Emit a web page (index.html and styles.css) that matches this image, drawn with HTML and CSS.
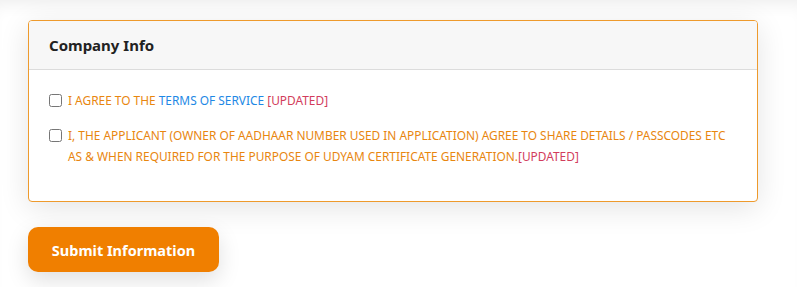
FILE: index.html
```html
<!DOCTYPE html>
<html lang="en">
<head>
  <meta charset="UTF-8">
  <meta name="viewport" content="width=device-width, initial-scale=1.0">
  <title>Company Info</title>
  <link rel="stylesheet" href="styles.css">
</head>
<body>

  <div class="page">
    <div class="card">
      <div class="card-header">Company Info</div>
      <div class="card-body">
        <label class="agree">
          <input type="checkbox" class="check">
          <span>I AGREE TO THE <a href="#" class="terms">TERMS OF SERVICE</a> <span class="updated">[UPDATED]</span></span>
        </label>
        <label class="agree">
          <input type="checkbox" class="check">
          <span>I, THE APPLICANT (OWNER OF AADHAAR NUMBER USED IN APPLICATION) AGREE TO SHARE DETAILS / PASSCODES ETC AS &amp; WHEN REQUIRED FOR THE PURPOSE OF UDYAM CERTIFICATE GENERATION.<span class="updated">[UPDATED]</span></span>
        </label>
      </div>
    </div>

    <button class="submit">Submit Information</button>
  </div>

</body>
</html>
```

FILE: styles.css
```css
* {
  margin: 0;
  padding: 0;
  box-sizing: border-box;
}

body {
  font-family: 'Noto Sans', 'Open Sans', sans-serif;
  background: #fff;
  overflow: hidden;
}

.page {
  padding: 20px 40px 20px 28px;
  box-shadow: inset 0 14px 16px -10px rgba(0, 0, 0, 0.07);
}

.card {
  width: 730px;
  background: #fff;
  border: 1px solid #ee9a2c;
  border-radius: 4px;
  box-shadow: 0 6px 30px rgba(0, 0, 0, 0.11);
  overflow: hidden;
}

.card-header {
  background: #f7f7f7;
  border-bottom: 1px solid #dcdcdc;
  padding: 0 20px;
  height: 49px;
  line-height: 49px;
  font-size: 15px;
  font-weight: 700;
  color: #222;
}

.card-body {
  padding: 20px 20px 20px;
}

.agree {
  display: flex;
  align-items: flex-start;
  gap: 6px;
  font-size: 11.9px;
  line-height: 21px;
  color: #e8860f;
  margin-bottom: 14px;
}

.check {
  width: 13px;
  height: 13px;
  margin-top: 4px;
  flex-shrink: 0;
}

.terms {
  color: #1e88e5;
  text-decoration: none;
}

.updated {
  color: #d23c5c;
}

.submit {
  margin-top: 25px;
  height: 45px;
  width: 191px;
  background: #f07f00;
  color: #fff;
  font-family: inherit;
  font-size: 14.5px;
  font-weight: 700;
  border: none;
  border-radius: 10px;
  box-shadow: 0 8px 22px rgba(0, 0, 0, 0.13);
  cursor: pointer;
}
```
